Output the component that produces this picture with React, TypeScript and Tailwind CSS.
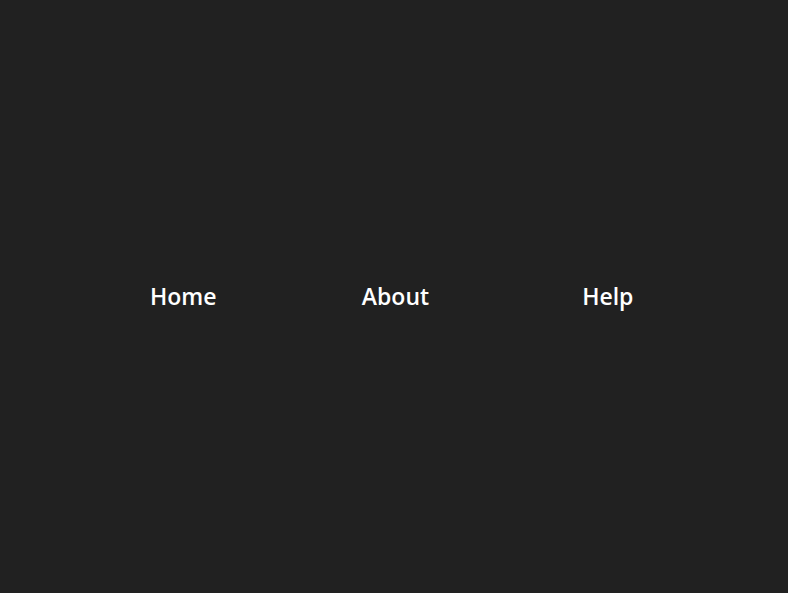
import React from 'react';

const links = ['Home', 'About', 'Help'];

export default function App() {
  return (
    <div className="bg-[#212121] h-[593px] w-full flex items-center justify-center">
      <nav className="grid grid-cols-3 w-[637px] ml-[3px]">
        {links.map(link => (
          <a
            key={link}
            href="#"
            className="text-center text-white text-[23px] font-semibold leading-none font-['Open_Sans',sans-serif]"
          >
            {link}
          </a>
        ))}
      </nav>
    </div>
  );
}
